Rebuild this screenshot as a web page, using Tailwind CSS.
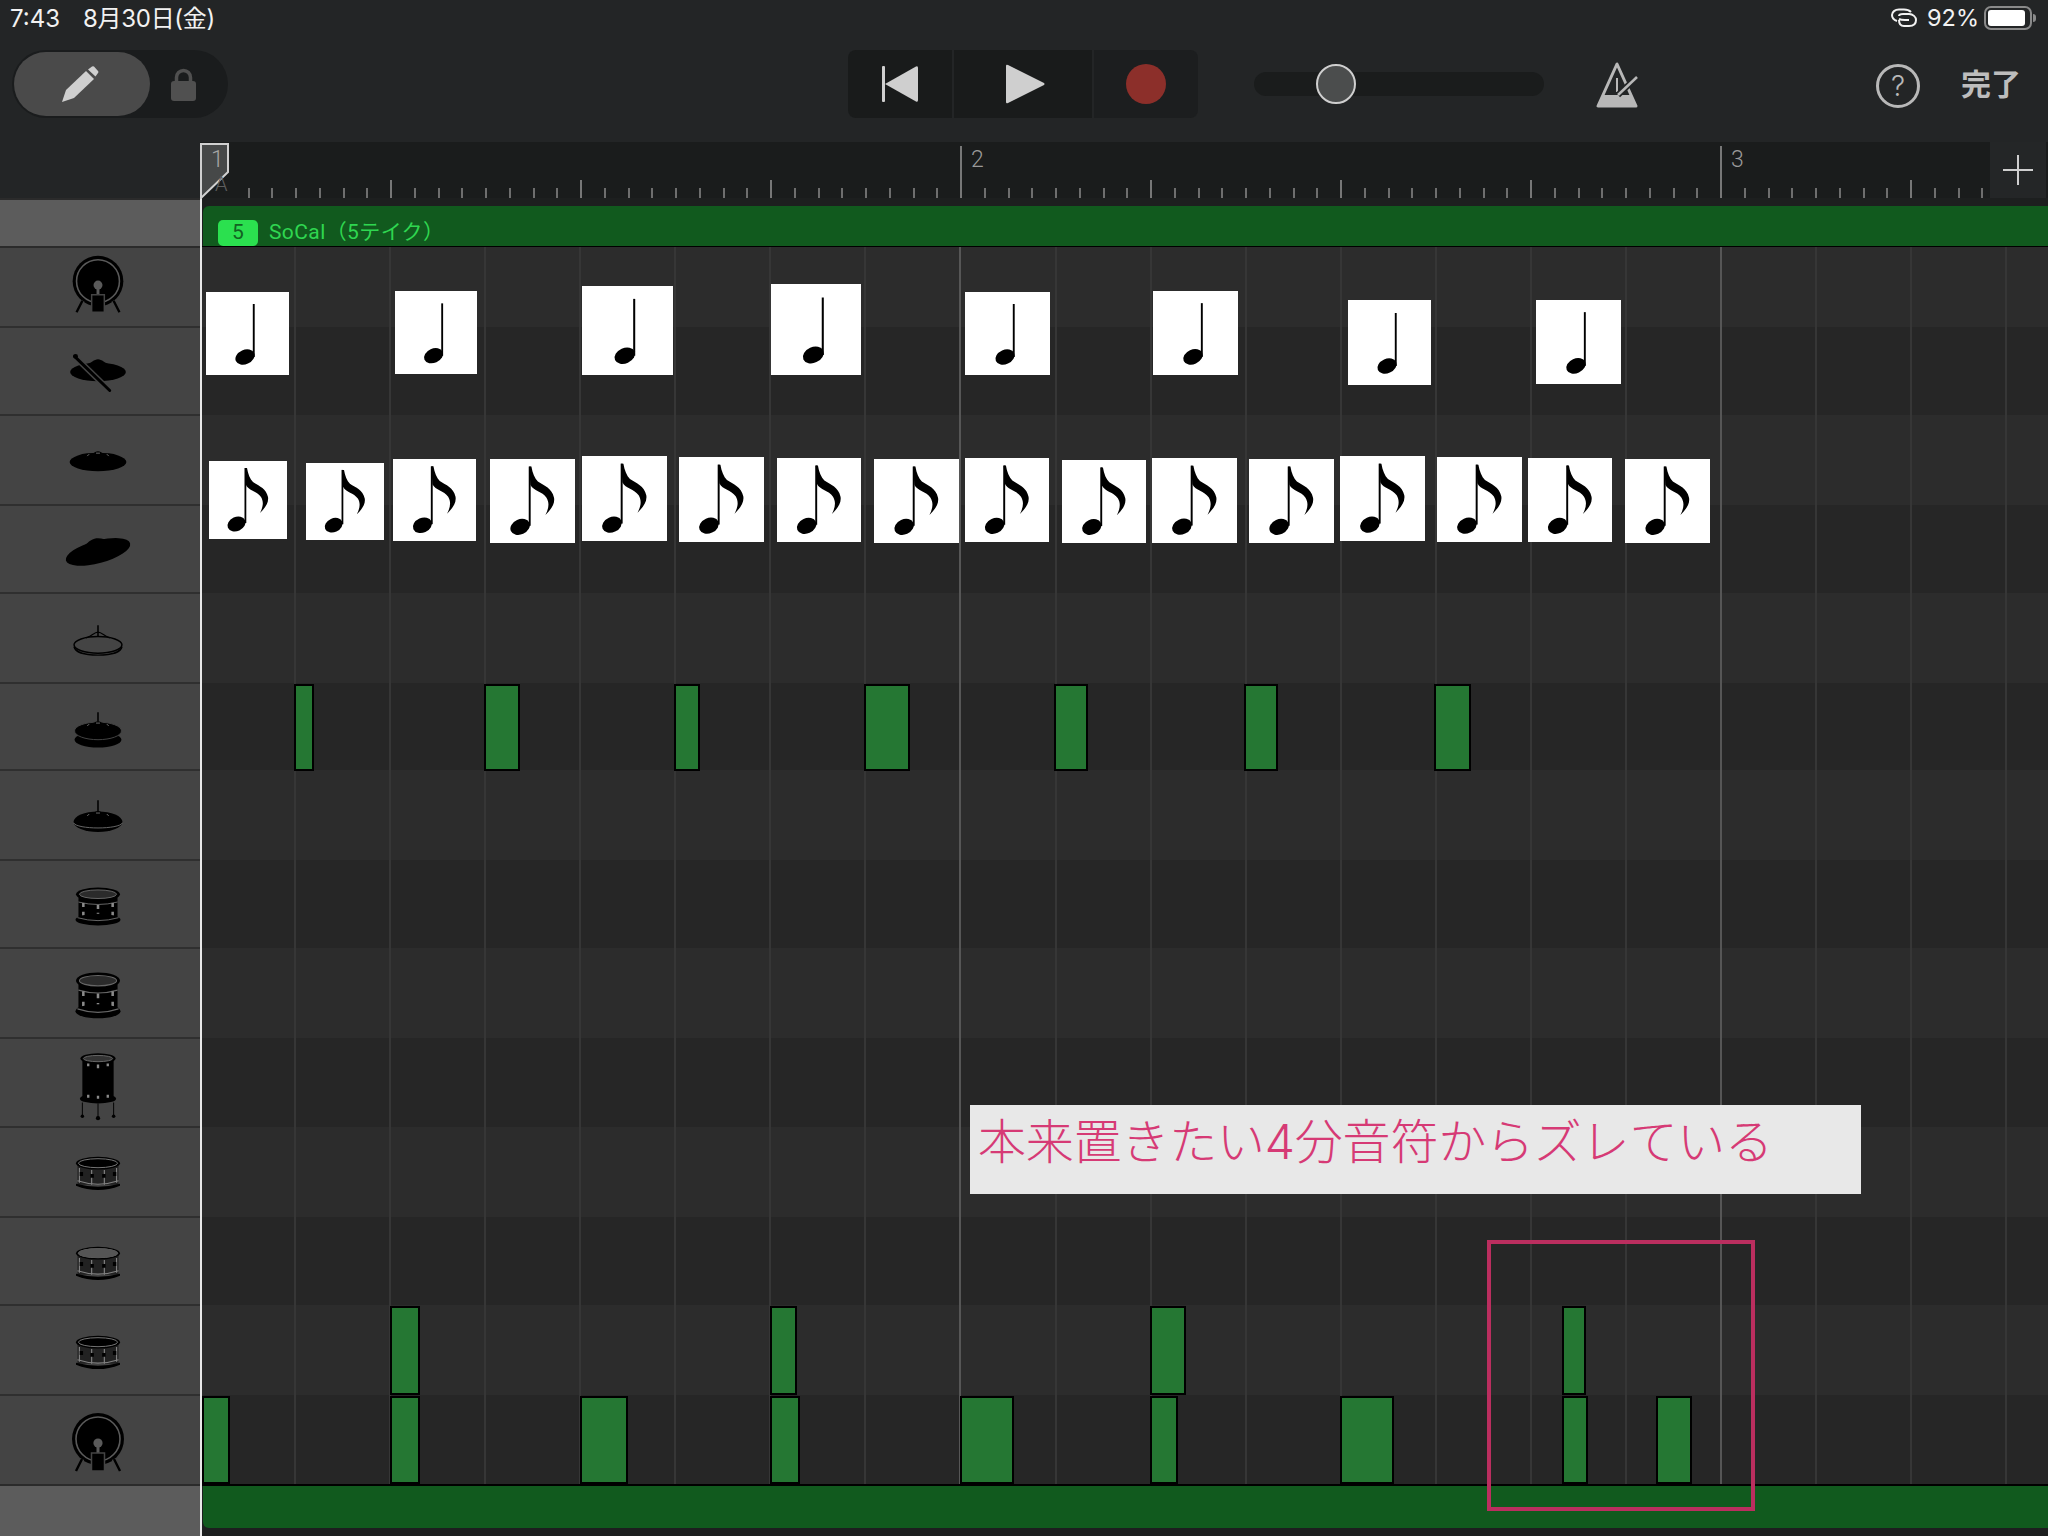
<!DOCTYPE html>
<html lang="ja">
<head>
  <meta charset="UTF-8">
  <meta name="viewport" content="width=device-width, initial-scale=1.0">
  <title>Drum Editor</title>
  <script src="https://cdn.jsdelivr.net/npm/@tailwindcss/browser@4"></script>
</head>
<body class="w-[2048px] h-[1536px] relative overflow-hidden bg-[#232526] font-['Inter','Noto_Sans_CJK_JP',sans-serif]">

<!-- shared drum drawings -->
<svg class="absolute w-0 h-0">
  <defs>
    <g id="kick">
      <circle r="26" fill="#000"/>
      <circle r="22" fill="#000" stroke="#5a5a5a" stroke-width="1.6"/>
      <path d="M-1.5 7h3v9h-3z" fill="#5a5a5a"/>
      <circle cy="4" r="4.6" fill="#5a5a5a"/>
      <path d="M-6.5 14h13v18h-13z" fill="#000" stroke="#444" stroke-width="1.5"/>
      <path d="M-16 20l-6 12M16 20l6 12" stroke="#444" stroke-width="5"/>
      <path d="M-16 20l-6 12M16 20l6 12" stroke="#000" stroke-width="2.4"/>
    </g>
    <g id="bell">
      <path d="M-13 -3C-7 -6 -4 -11 0 -11C4 -11 7 -6 13 -3" fill="#000"/>
      <path d="M-11 -6l2 -2M11 -6l-2 -2M-2 -9h4" stroke="#6a6a6a" stroke-width="1"/>
    </g>
    <g id="tom">
      <path d="M-20 6h40v28h-40z" fill="#000"/>
      <ellipse cy="7" rx="22.5" ry="7" fill="#000"/>
      <ellipse cy="7" rx="19" ry="4.4" fill="#2b2b2b" stroke="#666" stroke-width="1"/>
      <path d="M-20 15Q0 20 20 15" fill="none" stroke="#666" stroke-width="1"/>
      <path d="M-15 16v4M0 18v4M15 16v4M-15 25v4M0 26v4M15 25v4" stroke="#8a8a8a" stroke-width="2.600"/>
      <ellipse cy="33" rx="23" ry="6" fill="#000"/>
      <path d="M-21 31Q0 37 21 31" fill="none" stroke="#666" stroke-width="1"/>
    </g>
    <g id="snare">
      <path d="M-21 6h42v22h-42z" fill="#222"/>
      <ellipse cy="6" rx="22.5" ry="6.5" fill="#000"/>
      <ellipse cy="6" rx="20" ry="4.6" fill="#000" stroke="#777" stroke-width="1"/>
      <path d="M-19 11v15M-6.500 13v15M6.500 13v15M19 11v15" stroke="#808080" stroke-width="1.200"/>
      <path d="M-17 15v4M-6 17v4M6 17v4M17 15v4" stroke="#000" stroke-width="3.500"/>
      <path d="M-21 24Q0 31 21 24" fill="none" stroke="#808080" stroke-width="1.200"/>
      <path d="M-22.500 27Q0 33 22.500 27v2Q0 38 -22.500 29z" fill="#000"/>
    </g>
    <g id="quarter">
      <ellipse cx="39" cy="65" rx="10" ry="7.200" transform="rotate(-24 39 65)" fill="#000"/>
      <path d="M46.800 12h1.900v53h-1.900z" fill="#000"/>
    </g>
    <g id="eighth">
      <ellipse cx="27.500" cy="63" rx="9.400" ry="7" transform="rotate(-24 27.500 63)" fill="#000"/>
      <path d="M35.500 7h1.800v55h-1.800z" fill="#000"/>
      <path d="M36 7H38C39 13 41 18 44 21C50 25 57 27 59 36C60 42 56 47 51 52C54 46 55 41 52 36C48 30 40 30 37 24Z" fill="#000"/>
    </g>
  </defs>
</svg>

<!-- Status bar + toolbar -->
<header class="h-[142px] bg-[#232526]">
  <div class="h-[50px] px-[10px] flex justify-between items-start pt-[6px] text-[#f2f2f2] text-[24px] leading-[26px]">
    <div class="flex gap-[23px]">
      <span>7:43</span>
      <span class="tracking-[-0.3px]">8月30日(金)</span>
    </div>
    <div class="flex items-center pr-[2px] -mt-[1px] text-[23.500px]">
      <svg class="w-[26px] h-[20px]" viewBox="0 0 26 20" fill="none" stroke="#f2f2f2" stroke-width="2">
        <path d="M20 4C18 2 16 1.500 13 1.500H8C4 1.500 1 4 1 7C1 10 3 12 6 13"/>
        <path d="M8 8C8 6.500 10 6 12 6H18C22 6 25 9 25 12C25 16 22 18 18 18H13C9 18 8 15 8 12"/>
        <path d="M8 11C10 12 12 12 14 12H18"/>
      </svg>
      <span class="ml-[10px] w-[53px]">92%</span>
      <div class="ml-[4px] w-[48px] h-[24px] rounded-[7px] border-2 border-[#8a8a8a] p-[2px]">
        <div class="w-[37px] h-full bg-white rounded-[3px]"></div>
      </div>
      <div class="ml-[1px] w-[3px] h-[8px] bg-[#8a8a8a] rounded-r-full"></div>
    </div>
  </div>

  <div class="h-[68px] flex items-center">
    <!-- edit / lock switch -->
    <div class="ml-[12px] w-[216px] h-[68px] rounded-full bg-[#1a1c1d] flex items-center p-[2px]">
      <div class="w-[136px] h-[64px] rounded-full bg-[#4a4a4a] flex items-center justify-center pr-[5px]">
        <svg class="w-[38px] h-[37px]" viewBox="0 0 38 37" fill="#cfcfcf">
          <path d="M1 36L5 24L25 5L33 13L13 32Z"/>
          <path d="M27 3.500L31 .5Q32 0 33 .5L37 5Q38 6 37 7L34.500 10.500Z"/>
        </svg>
      </div>
      <svg class="ml-[21px] w-[25px] h-[33px]" viewBox="0 0 25 33">
        <path d="M5.500 14V9.500a7 7 0 0 1 14 0V14" fill="none" stroke="#505050" stroke-width="3.500"/>
        <rect y="13" width="25" height="20" rx="3" fill="#505050"/>
      </svg>
    </div>

    <!-- transport -->
    <div class="ml-[620px] w-[350px] h-[68px] rounded-[8px] overflow-hidden flex gap-[2px] bg-[#232526]">
      <div class="w-[104px] bg-[#191b1b] flex items-center justify-center pl-[2px]">
        <svg class="w-[38px] h-[38px]" viewBox="0 0 38 38" fill="#cfcfcf">
          <rect x="0" y="1" width="3" height="36" rx="1"/>
          <path d="M3 19L34 1.500Q36 .5 36 3V35Q36 37.500 34 36.500Z"/>
        </svg>
      </div>
      <div class="w-[138px] bg-[#191b1b] flex items-center justify-center pl-[4px]">
        <svg class="w-[40px] h-[40px]" viewBox="0 0 40 40" fill="#cfcfcf">
          <path d="M1 2Q1 0 3 1L39 19Q40 20 39 21L3 39Q1 40 1 38Z"/>
        </svg>
      </div>
      <div class="flex-1 bg-[#1c1e1f] flex items-center justify-center">
        <div class="w-[40px] h-[40px] rounded-full bg-[#8c2f2a]"></div>
      </div>
    </div>

    <!-- playhead slider -->
    <div class="ml-[56px] w-[290px] h-[24px] rounded-full bg-[#1a1c1c] relative">
      <div class="absolute left-[62px] -top-[8px] w-[40px] h-[40px] rounded-full bg-[#4b4d4d] border-2 border-[#cfcfcf]"></div>
    </div>

    <!-- metronome -->
    <svg class="ml-[52px] mt-[2px] w-[44px] h-[46px]" viewBox="0 0 44 46">
      <path d="M21 2L2 44H40Z" fill="none" stroke="#b8b8b8" stroke-width="3" stroke-linejoin="round"/>
      <path d="M7 33H35L41 45H1Z" fill="#b8b8b8"/>
      <path d="M21 16v14" stroke="#b8b8b8" stroke-width="2"/>
      <path d="M22 33L41 15" stroke="#232526" stroke-width="6"/>
      <path d="M22 33L41 15" stroke="#b8b8b8" stroke-width="2.500"/>
    </svg>

    <!-- help + done -->
    <div class="ml-[236px] mt-[4px] w-[44px] h-[44px] rounded-full border-[3px] border-[#b8b8b8] text-[#b8b8b8] text-[28px] font-light flex items-center justify-center">?</div>
    <span class="ml-[41px] text-[#bdbdbd] text-[30px] font-bold leading-none">完了</span>
  </div>
</header>

<!-- Ruler -->
<div class="h-[56px] flex">
  <div class="w-[200px]"></div>
  <div id="ruler" class="relative flex-1 bg-[#1a1c1c] text-[#9a9a9a] text-[23px] font-['Roboto','Noto_Sans_CJK_JP',sans-serif] font-light">
    <span class="absolute left-[11px] top-[1px] text-[#a5a5a5] z-10">1</span>
    <span class="absolute left-[15px] top-[27px] text-[#5e5e5e] text-[20px] z-10">A</span>
    <span class="absolute left-[771px] top-[1px]">2</span>
    <span class="absolute left-[1531px] top-[1px]">3</span>
    <svg class="absolute left-0 top-[1px] w-[30px] h-[56px]" viewBox="0 0 30 56">
      <path d="M1 1H28V29L1 55Z" fill="#9a9a9a" fill-opacity=".35" stroke="#d0d0d0" stroke-width="2"/>
    </svg>
  </div>
  <div class="w-[56px] bg-[#242627] flex items-center justify-center">
    <svg class="w-[30px] h-[30px]" viewBox="0 0 30 30" stroke="#cfcfcf" stroke-width="2"><path d="M15 0v30M0 15h30"/></svg>
  </div>
  <div class="w-[2px] bg-[#1a1c1c]"></div>
</div>

<!-- Editor -->
<main class="flex h-[1338px]">
  <!-- instrument rail -->
  <aside class="w-[200px] flex flex-col bg-[#444444]">
    <div class="h-[50px] shrink-0 bg-[#5c5c5c] border-y-2 border-[#2b2b2b]"></div>
    <div class="h-[80px] border-b-2 border-[#2f2f2f] pr-[4px] flex justify-center"><svg class="w-[80px]" viewBox="0 0 80 80"><use href="#kick" x="40" y="34"/></svg></div>
    <div class="h-[88px] border-b-2 border-[#2f2f2f] pr-[4px] flex justify-center">
      <svg class="w-[80px]" viewBox="0 0 80 88">
        <ellipse cx="40" cy="45" rx="28.500" ry="9.500"/>
        <path d="M27 38C33 36 36 32 40 32C44 32 47 36 53 38Z"/>
        <path d="M16 29L52 64" stroke="#444" stroke-width="6"/>
        <path d="M16 29L52 64" stroke="#000" stroke-width="3" stroke-linecap="round"/>
        <circle cx="17" cy="29" r="2.500"/>
      </svg>
    </div>
    <div class="h-[90px] border-b-2 border-[#2f2f2f] pr-[4px] flex justify-center"><svg class="w-[80px]" viewBox="0 0 80 90"><ellipse cx="40" cy="47" rx="29" ry="9.500"/><use href="#bell" x="40" y="47"/></svg></div>
    <div class="h-[88px] border-b-2 border-[#2f2f2f] pr-[4px] flex justify-center">
      <svg class="w-[80px]" viewBox="0 0 80 88"><g transform="rotate(-15 40 47)"><ellipse cx="40" cy="47" rx="34" ry="11.500"/><path d="M24 39C30 37 34 33 40 33C46 33 50 37 56 39Z"/></g></svg>
    </div>
    <div class="h-[90px] border-b-2 border-[#2f2f2f] pr-[4px] flex justify-center">
      <svg class="w-[80px]" viewBox="0 0 80 90" fill="none" stroke="#000">
        <path d="M40 32v14" stroke-width="1.600"/>
        <ellipse cx="40" cy="52" rx="24.500" ry="8.500" stroke-width="1.500" fill="#444"/>
        <path d="M15.500 54C17 60 28 62.500 40 62.500C52 62.500 63 60 64.500 54" stroke-width="1.500"/>
        <path d="M28 45C34 43 36 39 40 39C44 39 46 43 52 45" stroke-width="1.200"/>
      </svg>
    </div>
    <div class="h-[87px] border-b-2 border-[#2f2f2f] pr-[4px] flex justify-center">
      <svg class="w-[80px]" viewBox="0 0 80 87">
        <path d="M39.200 29h1.600v14h-1.600z"/>
        <ellipse cx="40" cy="57" rx="24" ry="8"/>
        <ellipse cx="40" cy="48" rx="24" ry="9" stroke="#444" stroke-width="1"/>
        <use href="#bell" x="40" y="49"/>
      </svg>
    </div>
    <div class="h-[90px] border-b-2 border-[#2f2f2f] pr-[4px] flex justify-center">
      <svg class="w-[80px]" viewBox="0 0 80 90">
        <path d="M39.200 30h1.600v14h-1.600z"/>
        <ellipse cx="40" cy="52" rx="25" ry="10.500"/>
        <path d="M15 53C18 60 62 60 65 53" fill="none" stroke="#666" stroke-width="1"/>
        <use href="#bell" x="40" y="52"/>
      </svg>
    </div>
    <div class="h-[88px] border-b-2 border-[#2f2f2f] pr-[4px] flex justify-center"><svg class="w-[80px]" viewBox="0 0 80 88"><use href="#tom" x="40" y="27"/></svg></div>
    <div class="h-[90px] border-b-2 border-[#2f2f2f] pr-[4px] flex justify-center"><svg class="w-[80px]" viewBox="0 0 80 90"><g transform="translate(40 24) scale(1 1.200)"><use href="#tom"/></g></svg></div>
    <div class="h-[89px] border-b-2 border-[#2f2f2f] pr-[4px] flex justify-center">
      <svg class="w-[80px]" viewBox="0 0 80 89">
        <path d="M24 19h32v42h-32z"/>
        <ellipse cx="40" cy="20" rx="18" ry="5.500"/>
        <ellipse cx="40" cy="20" rx="15" ry="3.200" fill="#333" stroke="#666" stroke-width="1"/>
        <ellipse cx="40" cy="61" rx="18.500" ry="5"/>
        <path d="M30 25v3M40 26v4M50 25v3M30 57v3M40 58v3M50 57v3" stroke="#8a8a8a" stroke-width="2.400"/>
        <path d="M24 65v14M40 66v14M56 65v14" stroke="#000" stroke-width="1"/>
        <circle cx="24" cy="79" r="1.800"/><circle cx="40" cy="81" r="2.200"/><circle cx="56" cy="79" r="1.800"/>
      </svg>
    </div>
    <div class="h-[90px] border-b-2 border-[#2f2f2f] pr-[4px] flex justify-center"><svg class="w-[80px]" viewBox="0 0 80 90"><use href="#snare" x="40" y="30"/></svg></div>
    <div class="h-[88px] border-b-2 border-[#2f2f2f] pr-[4px] flex justify-center">
      <svg class="w-[80px]" viewBox="0 0 80 88"><use href="#snare" x="40" y="30"/><ellipse cx="40" cy="36" rx="20.500" ry="5" fill="#555"/></svg>
    </div>
    <div class="h-[90px] border-b-2 border-[#2f2f2f] pr-[4px] flex justify-center"><svg class="w-[80px]" viewBox="0 0 80 90"><use href="#snare" x="40" y="31"/></svg></div>
    <div class="h-[88px] pr-[4px] flex justify-center"><svg class="w-[80px]" viewBox="0 0 80 88"><use href="#kick" x="40" y="43"/></svg></div>
    <div class="flex-1 bg-[#5c5c5c] border-t-2 border-[#2b2b2b]"></div>
  </aside>
  <div class="w-[2px] bg-[#e8e8e8]"></div>

  <!-- piano roll -->
  <section class="flex-1 flex flex-col bg-[#1d1f1f]">
    <div class="h-[8px] shrink-0"></div>
    <div class="h-[40px] shrink-0 ml-px bg-[#115a1e] rounded-tl-[6px] flex items-end pl-[15px] gap-[11px]">
      <span class="w-[40px] h-[26px] rounded-[5px] bg-[#2be04f] text-[#126322] text-[21px] flex items-center justify-center font-['Roboto']">5</span>
      <span class="text-[#2fd650] text-[21px] leading-[28px] font-['Roboto','Noto_Sans_CJK_JP',sans-serif] tracking-[0.4px]">SoCal（5テイク）</span>
    </div>
    <div class="h-px shrink-0 bg-black"></div>
    <div id="grid" class="relative h-[1237px] shrink-0 flex flex-col">
      <div class="h-[80px] bg-[#2c2c2c]"></div>
      <div class="h-[88px] bg-[#262626]"></div>
      <div class="h-[90px] bg-[#2c2c2c]"></div>
      <div class="h-[88px] bg-[#262626]"></div>
      <div class="h-[90px] bg-[#2c2c2c]"></div>
      <div class="h-[87px] bg-[#262626]"></div>
      <div class="h-[90px] bg-[#2c2c2c]"></div>
      <div class="h-[88px] bg-[#262626]"></div>
      <div class="h-[90px] bg-[#2c2c2c]"></div>
      <div class="h-[89px] bg-[#262626]"></div>
      <div class="h-[90px] bg-[#2c2c2c]"></div>
      <div class="h-[88px] bg-[#262626]"></div>
      <div class="h-[90px] bg-[#2c2c2c]"></div>
      <div class="h-[89px] bg-[#262626]"></div>
    </div>
    <div class="h-[2px] shrink-0 bg-black"></div>
    <div class="h-[42px] shrink-0 ml-px bg-[#115a1e] rounded-bl-[6px]"></div>
  </section>
</main>

<!-- Annotation overlay -->
<div class="absolute left-[970px] top-[1105px] w-[891px] h-[89px] bg-[#e8e8e8] pl-[8px] text-[#d63a75] text-[48px] leading-[74px] font-light tracking-[-0.2px] whitespace-nowrap">本来置きたい4分音符からズレている</div>
<div class="absolute left-[1487px] top-[1240px] w-[268px] h-[271px] border-4 border-[#bb2e5f]"></div>

<script>
// everything below is in page coordinates, grid origin is (202, 247)
const OX = 202, OY = 247;
const grid = document.getElementById('grid');
const ruler = document.getElementById('ruler');

function place(el, x1, y1, x2, y2) {
  el.style.left = (x1 - OX) + 'px';
  el.style.top = (y1 - OY) + 'px';
  el.style.width = (x2 - x1) + 'px';
  el.style.height = (y2 - y1) + 'px';
  grid.appendChild(el);
}

// beat lines
for (let i = 1; i <= 19; i++) {
  const x = Math.round(199 + 95.06 * i);
  const line = document.createElement('div');
  line.className = i % 8 === 0 ? 'absolute bg-[#565656]' : 'absolute bg-[#363636]';
  place(line, x, 247, x + 2, 1484);
}

// ruler ticks
for (let k = 2; k * 23.75 < 1790; k++) {
  const tick = document.createElement('div');
  if (k % 32 === 0) tick.className = 'absolute bottom-0 w-[2px] h-[52px] bg-[#777777]';
  else if (k % 8 === 0) tick.className = 'absolute bottom-0 w-[2px] h-[18px] bg-[#777777]';
  else tick.className = 'absolute bottom-0 w-[2px] h-[10px] bg-[#6e6e6e]';
  tick.style.left = Math.round(k * 23.75) + 'px';
  ruler.appendChild(tick);
}

// hit notes: x1, x2, row top, row bottom
const notes = [
  [294, 314, 684, 771], [484, 520, 684, 771], [674, 700, 684, 771], [864, 910, 684, 771],
  [1054, 1088, 684, 771], [1244, 1278, 684, 771], [1434, 1471, 684, 771],
  [390, 420, 1306, 1395], [770, 797, 1306, 1395], [1150, 1186, 1306, 1395], [1562, 1586, 1306, 1395],
  [202, 230, 1396, 1484], [390, 420, 1396, 1484], [580, 628, 1396, 1484], [770, 800, 1396, 1484],
  [960, 1014, 1396, 1484], [1150, 1178, 1396, 1484], [1340, 1394, 1396, 1484],
  [1562, 1588, 1396, 1484], [1656, 1692, 1396, 1484]
];
notes.forEach(([x1, x2, y1, y2]) => {
  const n = document.createElement('div');
  n.className = 'absolute bg-[#257733] border-2 border-black';
  place(n, x1, y1, x2, y2);
});

// pasted note cards: x1, y1, x2, y2
const quarters = [
  [206, 292, 289, 375], [395, 291, 477, 374], [582, 286, 673, 375], [771, 284, 861, 375],
  [965, 292, 1050, 375], [1153, 291, 1238, 375], [1348, 300, 1431, 385], [1536, 300, 1621, 384]
];
const eighths = [
  [209, 461, 287, 539], [306, 463, 384, 540], [393, 459, 476, 541], [490, 459, 575, 543],
  [582, 456, 667, 541], [679, 457, 764, 542], [777, 458, 861, 542], [874, 459, 959, 543],
  [965, 458, 1049, 542], [1062, 460, 1146, 543], [1152, 458, 1237, 543], [1249, 459, 1334, 543],
  [1340, 456, 1425, 541], [1437, 457, 1522, 542], [1528, 458, 1612, 542], [1625, 459, 1710, 543]
];
function addCards(list, symbol, box) {
  list.forEach(([x1, y1, x2, y2]) => {
    const card = document.createElement('div');
    card.className = 'absolute bg-white';
    card.innerHTML = `<svg class="w-full h-full" viewBox="0 0 ${box} ${box}"><use href="#${symbol}"/></svg>`;
    place(card, x1, y1, x2, y2);
  });
}
addCards(quarters, 'quarter', 83);
addCards(eighths, 'eighth', 78);
</script>
</body>
</html>
